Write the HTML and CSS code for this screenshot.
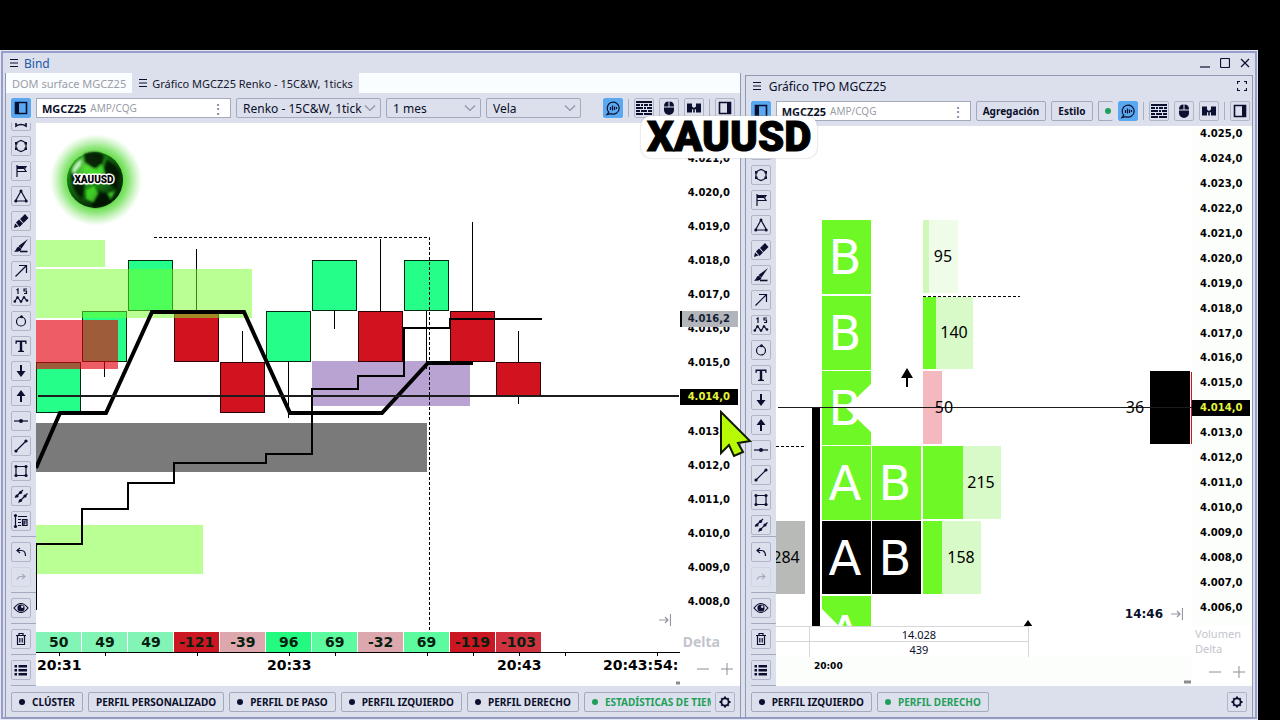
FILE: index.html
```
<!DOCTYPE html>
<html lang="es">
  <head>
    <meta charset="UTF-8">
    <meta name="viewport" content="width=device-width,initial-scale=1">
    <title>Bind</title>
    <link rel="stylesheet" href="styles.css">
  </head>
  <body>
    <!-- icon sprite -->
    <svg class="sprite" aria-hidden="true">
      <symbol id="i-menu" viewBox="0 0 10 10"><path d="M1 1.500h8M1 5h8M1 8.500h8"/></symbol>
      <symbol id="i-left" viewBox="0 0 16 16"><path stroke-width="1.600" d="M2.500 2.500h11v11h-11z"/><path class="f" d="M2 2h4v12H2z"/></symbol>
      <symbol id="i-right" viewBox="0 0 16 16"><path stroke-width="1.600" d="M2.500 2.500h11v11h-11z"/><path class="f" d="M10 2h4v12h-4z"/></symbol>
      <symbol id="i-bubble" viewBox="0 0 16 16"><path d="M3.800 12.200A6 6 0 1 1 6 13.700L2 14.500zM5.500 7v3M7.500 5.500v5M9.500 6.500v3.500M11.500 7v2"/></symbol>
      <symbol id="i-grid" viewBox="0 0 16 16"><path class="f" d="M0 1h16v2H0zM0 4h4v2H0zM5 4h2v2H5zM8 4h4v2H8zM13 4h3v2h-3zM0 7h7v2H0zM8 7h2v2H8zM11 7h5v2h-5zM0 10h4v2H0zM5 10h6v2H5zM12 10h4v2h-4zM0 13h7v2H0zM8 13h8v2H8z"/></symbol>
      <symbol id="i-mouse" viewBox="0 0 16 16"><path class="f" d="M3 6.500Q3 1.500 7.500 1.500v5zM8.500 1.500Q13 1.500 13 6.500H8.500zM3 7.500h10V10a5 5 0 0 1-10 0z"/></symbol>
      <symbol id="i-link" viewBox="0 0 16 16"><path class="f" d="M1 3.500h5v3l2 1.500 2-1.500v-3h5v9h-5V9.500L8.800 9v3.500H7.200V9L6 9.500v3H1z"/></symbol>
      <symbol id="i-pattern" viewBox="0 0 16 16"><path stroke-width="1.600" d="M3 10v3q5-3 10 0v-3"/></symbol>
      <symbol id="i-hex" viewBox="0 0 16 16"><path d="M5.500 3.500L8 2.500l2.500 1 2.500 1.500v6l-2.500 1.500L8 13.500l-2.500-1L3 11V5z"/><path class="f" d="M2 4h2.500v2.500H2zM11.500 4H14v2.500h-2.500zM2 9.500h2.500V12H2zM11.500 9.500H14V12h-2.500z"/></symbol>
      <symbol id="i-flag" viewBox="0 0 16 16"><path d="M4 2v12M4 3.500h9L11.500 6 13 8.500H4"/><path class="f" d="M4 3h8.500L11 6H4z"/></symbol>
      <symbol id="i-tri" viewBox="0 0 16 16"><path d="M8 3L13.500 13h-11z"/><g class="f"><circle cx="8" cy="3" r="1.500"/><circle cx="13.200" cy="13" r="1.500"/><circle cx="2.800" cy="13" r="1.500"/></g></symbol>
      <symbol id="i-marker" viewBox="0 0 16 16"><path class="f" d="M1 15l1-4.500 3.500 3zM3 9.500L6 6.500l4 4L6.500 14zM7 6l5-5 3.500 4-5 5z"/></symbol>
      <symbol id="i-brush" viewBox="0 0 16 16"><path class="f" d="M15 1l-6.500 9.500-3-2.500zM1 13.500q2-1 3-4l2-.8L8.500 11q-1 3.500-7.500 2.500z"/><path stroke-width="1.600" d="M7 13.500h7.500"/></symbol>
      <symbol id="i-arrow" viewBox="0 0 16 16"><path d="M2.500 13.500L13 3M6 2.500h7.500V10"/></symbol>
      <symbol id="i-wave" viewBox="0 0 16 16"><path d="M1.500 14l3-5 3.500 5 3-5 2.500 3.500"/><g class="f"><circle cx="1.800" cy="13.500" r="1.300"/><circle cx="4.500" cy="9.500" r="1.300"/><circle cx="8" cy="13.500" r="1.300"/><circle cx="11" cy="9.500" r="1.300"/><circle cx="14" cy="12.500" r="1.300"/></g><path d="M3.500 2L5 1v5M14 1h-3v2h2.500v2.500H11"/></symbol>
      <symbol id="i-circle" viewBox="0 0 16 16"><circle cx="8" cy="8.500" r="4.500"/><circle class="f" cx="8.500" cy="3.800" r="1.500"/></symbol>
      <symbol id="i-text" viewBox="0 0 16 16"><path class="f" d="M2.500 2.500h11V6h-1l-.5-2H9.200v8.500l1.800.5v1H5v-1l1.800-.5V4H4l-.5 2h-1z"/></symbol>
      <symbol id="i-down" viewBox="0 0 16 16"><path class="f" d="M7 2h2v6h3.500L8 14 3.500 8H7z"/></symbol>
      <symbol id="i-up" viewBox="0 0 16 16"><path class="f" d="M7 14h2V8h3.500L8 2 3.500 8H7z"/></symbol>
      <symbol id="i-hline" viewBox="0 0 16 16"><path d="M1 8h14"/><circle class="f" cx="8" cy="8" r="2"/></symbol>
      <symbol id="i-line" viewBox="0 0 16 16"><path d="M3 13L13 3"/><g class="f"><circle cx="3" cy="13" r="1.600"/><circle cx="13" cy="3" r="1.600"/></g></symbol>
      <symbol id="i-rect" viewBox="0 0 16 16"><path d="M3 3.500h10v9H3z"/><g class="f"><circle cx="3" cy="3.500" r="1.600"/><circle cx="13" cy="3.500" r="1.600"/><circle cx="3" cy="12.500" r="1.600"/><circle cx="13" cy="12.500" r="1.600"/></g></symbol>
      <symbol id="i-para" viewBox="0 0 16 16"><path d="M2 9.500L10 2M5.500 14.500l9-9"/><g class="f"><circle cx="4" cy="8" r="1.600"/><circle cx="7.500" cy="4.500" r="1.600"/><circle cx="7.500" cy="12.500" r="1.600"/><circle cx="12" cy="8" r="1.600"/></g></symbol>
      <symbol id="i-fib" viewBox="0 0 16 16"><path d="M2.500 2v12M5 3.500h9M5 6.500h3M5 9.500h3M5 12.500h3"/><g class="f"><circle cx="2.500" cy="2.500" r="1.600"/><circle cx="2.500" cy="13.500" r="1.600"/></g><path d="M9.500 6.500H14v6H9.500zM11 12V8h2.500M11 10h2"/></symbol>
      <symbol id="i-undo" viewBox="0 0 16 16"><path d="M7 4L4 6.500 7 9M4 6.500h4.500q4 0 4 5.500"/></symbol>
      <symbol id="i-redo" viewBox="0 0 16 16"><path d="M9 5l3 2.500L9 10M12 7.500H8q-3 0-4 3"/></symbol>
      <symbol id="i-eye" viewBox="0 0 16 16"><path d="M1 8q7-9 14 0-7 9-14 0z"/><circle class="f" cx="8" cy="8" r="3.600"/><circle cx="9.200" cy="6.800" r="1.200" fill="#dde0ee" stroke="none"/></symbol>
      <symbol id="i-trash" viewBox="0 0 16 16"><path d="M3 4.500h10M6 4V2.500h4V4M4.500 5v8.500h7V5M6.800 7v4.500M9.200 7v4.500"/></symbol>
      <symbol id="i-list" viewBox="0 0 16 16"><path class="f" d="M1.500 3h2.500v2.500H1.500zM5.500 3H14v2.500H5.500zM1.500 7h2.500v2.500H1.500zM5.500 7H14v2.500H5.500zM1.500 11h2.500v2.500H1.500zM5.500 11H14v2.500H5.500z"/></symbol>
      <symbol id="i-gear" viewBox="0 0 16 16"><circle cx="8" cy="8" r="3.600" stroke-width="1.800"/><path stroke-width="2" d="M8 2.500v1.500M8 12v1.500M2.500 8H4M12 8h1.500M4.300 4.300l.8.800M10.900 10.900l.8.800M11.700 4.300l-.8.800M5.100 10.900l-.8.800"/></symbol>
      <symbol id="i-end" viewBox="0 0 12 12"><path d="M0 6h9M6 3l3 3-3 3M11.500 0v12"/></symbol>
      <symbol id="i-chevron" viewBox="0 0 12 8"><path d="M1 1.500l5 5 5-5"/></symbol>
    </svg>

    <div class="window">
      <header class="titlebar">
        <svg class="menu"><use href="#i-menu"/></svg>
        <a href="#bind">Bind</a>
        <div class="winbtns">
          <button aria-label="Minimizar"><svg viewBox="0 0 10 10"><path d="M0 9h10"/></svg></button>
          <button aria-label="Maximizar"><svg viewBox="0 0 10 10"><rect x="0.500" y="0.500" width="9" height="9" rx="1"/></svg></button>
          <button aria-label="Cerrar"><svg viewBox="0 0 10 10"><path d="M1 1l8 8M9 1L1 9"/></svg></button>
        </div>
      </header>

      <main class="panels">
        <section class="panel renko">
          <nav class="tabs">
            <a href="#dom">DOM surface MGCZ25</a>
            <a href="#renko" class="active"><svg class="menu"><use href="#i-menu"/></svg>Gráfico MGCZ25 Renko - 15C&amp;W, 1ticks</a>
          </nav>
          <div class="toolbar">
            <button class="ico on" aria-label="Panel izquierdo"><svg><use href="#i-left"/></svg></button>
            <button class="symbol"><b>MGCZ25</b> <span>AMP/CQG</span><i>⋮</i></button>
            <label class="pick wide"><select aria-label="Tipo"><option>Renko - 15C&amp;W, 1ticks</option></select><svg><use href="#i-chevron"/></svg></label>
            <label class="pick"><select aria-label="Periodo"><option>1 mes</option></select><svg><use href="#i-chevron"/></svg></label>
            <label class="pick"><select aria-label="Estilo"><option>Vela</option></select><svg><use href="#i-chevron"/></svg></label>
            <div class="right">
              <button class="ico on" aria-label="Datos"><svg><use href="#i-bubble"/></svg></button>
              <hr>
              <button class="ico" aria-label="Tabla"><svg><use href="#i-grid"/></svg></button>
              <button class="ico" aria-label="Ratón"><svg><use href="#i-mouse"/></svg></button>
              <button class="ico" aria-label="Enlace"><svg><use href="#i-link"/></svg></button>
              <hr>
              <button class="ico" aria-label="Panel derecho"><svg><use href="#i-right"/></svg></button>
            </div>
          </div>

          <div class="work">
            <aside class="tools">
              <div class="draw">
                <button class="ico" aria-label="Patrón"><svg><use href="#i-pattern"/></svg></button>
                <button class="ico" aria-label="Polígono"><svg><use href="#i-hex"/></svg></button>
                <button class="ico" aria-label="Bandera"><svg><use href="#i-flag"/></svg></button>
                <button class="ico" aria-label="Triángulo"><svg><use href="#i-tri"/></svg></button>
                <button class="ico" aria-label="Marcador"><svg><use href="#i-marker"/></svg></button>
                <button class="ico" aria-label="Pincel"><svg><use href="#i-brush"/></svg></button>
                <button class="ico" aria-label="Flecha"><svg><use href="#i-arrow"/></svg></button>
                <button class="ico" aria-label="Ondas"><svg><use href="#i-wave"/></svg></button>
                <button class="ico" aria-label="Círculo"><svg><use href="#i-circle"/></svg></button>
                <button class="ico" aria-label="Texto"><svg><use href="#i-text"/></svg></button>
                <button class="ico" aria-label="Abajo"><svg><use href="#i-down"/></svg></button>
                <button class="ico" aria-label="Arriba"><svg><use href="#i-up"/></svg></button>
                <button class="ico" aria-label="Horizontal"><svg><use href="#i-hline"/></svg></button>
                <button class="ico" aria-label="Línea"><svg><use href="#i-line"/></svg></button>
                <button class="ico" aria-label="Rectángulo"><svg><use href="#i-rect"/></svg></button>
                <button class="ico" aria-label="Paralelas"><svg><use href="#i-para"/></svg></button>
                <button class="ico" aria-label="Fibonacci"><svg><use href="#i-fib"/></svg></button>
              </div>
              <div class="grp"><button class="ico" aria-label="Deshacer"><svg><use href="#i-undo"/></svg></button><button class="ico" aria-label="Rehacer" disabled><svg><use href="#i-redo"/></svg></button></div>
              <div class="grp"><button class="ico" aria-label="Ver"><svg><use href="#i-eye"/></svg></button></div>
              <div class="grp"><button class="ico" aria-label="Borrar"><svg><use href="#i-trash"/></svg></button></div>
              <div class="grp last"><button class="ico" aria-label="Lista"><svg><use href="#i-list"/></svg></button></div>
            </aside>

            <div class="chart">
              <div class="plot">
                <svg class="canvas">
                  <defs>
                    <radialGradient id="glow"><stop offset="0.500" stop-color="#3fd41c"/><stop offset="0.720" stop-color="#6fe056" stop-opacity=".75"/><stop offset="1" stop-color="#8fe87c" stop-opacity="0"/></radialGradient>
                    <radialGradient id="ball" cx=".35" cy=".3" r=".75"><stop offset="0" stop-color="#5be03c"/><stop offset=".5" stop-color="#157a10"/><stop offset="1" stop-color="#031a04"/></radialGradient>
                    <filter id="soft"><feGaussianBlur stdDeviation="1.200"/></filter>
                  </defs>
                  <g transform="translate(-36 -123)">
                    <path fill="#7a7a7a" d="M36 423h391v49H36z"/>
                    <path fill="#b9a3d2" d="M312 361h158v45H312z"/>
                    <path class="wick" d="M104.500 361v16M196.500 249v62M242.500 331v31M288.500 361v57M334.500 311v18M380.500 239v72M426.500 311v58M472.500 222v89M518.500 331v73"/>
                    <g class="buy">
                      <rect x="36.500" y="362.500" width="44" height="50"/>
                      <rect x="82.500" y="311.500" width="44" height="50"/>
                      <rect x="128.500" y="260.500" width="44" height="50"/>
                      <rect x="266.500" y="311.500" width="44" height="50"/>
                      <rect x="312.500" y="260.500" width="44" height="50"/>
                      <rect x="404.500" y="260.500" width="44" height="50"/>
                    </g>
                    <g class="sell">
                      <rect x="174.500" y="311.500" width="44" height="50"/>
                      <rect x="220.500" y="362.500" width="44" height="50"/>
                      <rect x="358.500" y="311.500" width="44" height="50"/>
                      <rect x="450.500" y="311.500" width="44" height="50"/>
                      <rect x="496.500" y="362.500" width="44" height="33"/>
                    </g>
                    <path class="zone-g" d="M36 240h69v27H36zM36 269h216v49H36zM36 525h167v49H36z"/>
                    <path class="zone-r" d="M36 320h82v49H36z"/>
                    <path class="step" d="M36 610V544H82V509H128V483H174V463H266V454H312V389H358V376H404V328H450V319H542"/>
                    <path class="trend" d="M36 468L60 413H106L152 312H244L290 413H382L428 363H473"/>
                    <path class="now" d="M38 396H679"/>
                    <path class="dots" d="M154 237.500H429.500V632"/>
                    <circle cx="96" cy="180" r="46" fill="url(#glow)"/>
                    <circle cx="95" cy="180" r="28" fill="url(#ball)"/>
                    <g filter="url(#soft)">
                      <path fill="#031003" opacity=".85" d="M84 154q14-5 20 2l-2 9-8 4-9-7zM107 160q10 4 13 14l-3 16-9-7-7-8zM71 173l9 3 5 10-3 13q-12-10-11-26zM96 190l12 4 3 7q-8 7-18 6l-3-8z"/>
                      <path fill="#49e62c" opacity=".8" d="M88 167l9 3 4-6 4 9-8 6-7-3zM86 190l8-4 4 7-5 9-7-3zM108 193l7-2-4 8z"/>
                      <path fill="#dfffe0" opacity=".8" d="M72 170q3-8 10-11l-1 6-7 9z"/>
                    </g>
                    <text class="ball-name" x="94" y="183">XAUUSD</text>
                  </g>
                </svg>
                <svg class="end"><use href="#i-end"/></svg>
              </div>
              <ol class="prices">
                <li>4.021,0</li><li>4.020,0</li><li>4.019,0</li><li>4.018,0</li><li>4.017,0</li><li>4.016,0</li><li>4.015,0</li>
                <li class="tag">4.014,0</li>
                <li>4.013,0</li><li>4.012,0</li><li>4.011,0</li><li>4.010,0</li><li>4.009,0</li><li>4.008,0</li>
                <li class="avg">4.016,2</li>
              </ol>
              <table class="delta">
                <tr>
                  <td class="g1">50</td><td class="g1">49</td><td class="g1">49</td><td class="r4">-121</td><td class="r1">-39</td><td class="g3">96</td><td class="g2">69</td><td class="r1">-32</td><td class="g2">69</td><td class="r4">-119</td><td class="r3">-103</td>
                </tr>
              </table>
              <div class="rowname">Delta</div>
              <svg class="times">
                <path d="M0 .5H2000M23.500 0v4M69.500 0v4M161.500 0v4M253.500 0v4M299.500 0v4M391.500 0v4M437.500 0v4M483.500 0v4M529.500 0v4M621.500 0v4"/>
                <text x="1" y="18">20:31</text><text x="231" y="18">20:33</text><text x="461" y="18">20:43</text><text x="567" y="18">20:43:54:</text>
                <path class="grip" d="M640 31h5"/>
              </svg>
              <div class="zoom"><button aria-label="Alejar"><svg viewBox="0 0 12 12"><path d="M0 6h12"/></svg></button><button aria-label="Acercar"><svg viewBox="0 0 12 12"><path d="M0 6h12M6 0v12"/></svg></button></div>
            </div>
          </div>

          <footer class="bottom">
            <div class="chips">
              <button class="dot">CLÚSTER</button>
              <button>PERFIL PERSONALIZADO</button>
              <button class="dot">PERFIL DE PASO</button>
              <button class="dot">PERFIL IZQUIERDO</button>
              <button class="dot">PERFIL DERECHO</button>
              <button class="dot live">ESTADÍSTICAS DE TIEMPO</button>
            </div>
            <button class="ico" aria-label="Ajustes"><svg><use href="#i-gear"/></svg></button>
          </footer>
        </section>

        <section class="panel tpo">
          <h2 class="caption"><svg class="menu"><use href="#i-menu"/></svg>Gráfico TPO MGCZ25
            <button aria-label="Pantalla completa"><svg viewBox="0 0 10 10"><path d="M.5 3V.5H3M7 .5h2.500V3M9.500 7v2.500H7M3 9.500H.5V7"/></svg></button>
          </h2>
          <div class="toolbar">
            <button class="ico on" aria-label="Panel izquierdo"><svg><use href="#i-left"/></svg></button>
            <button class="symbol"><b>MGCZ25</b> <span>AMP/CQG</span><i>⋮</i></button>
            <button class="txt">Agregación</button>
            <button class="txt">Estilo</button>
            <button class="led" aria-label="Estado"></button>
            <div class="right">
              <button class="ico on" aria-label="Datos"><svg><use href="#i-bubble"/></svg></button>
              <hr>
              <button class="ico" aria-label="Tabla"><svg><use href="#i-grid"/></svg></button>
              <button class="ico" aria-label="Ratón"><svg><use href="#i-mouse"/></svg></button>
              <button class="ico" aria-label="Enlace"><svg><use href="#i-link"/></svg></button>
              <hr>
              <button class="ico" aria-label="Panel derecho"><svg><use href="#i-right"/></svg></button>
            </div>
          </div>

          <div class="work">
            <aside class="tools">
              <div class="draw">
                <button class="ico" aria-label="Patrón"><svg><use href="#i-pattern"/></svg></button>
                <button class="ico" aria-label="Polígono"><svg><use href="#i-hex"/></svg></button>
                <button class="ico" aria-label="Bandera"><svg><use href="#i-flag"/></svg></button>
                <button class="ico" aria-label="Triángulo"><svg><use href="#i-tri"/></svg></button>
                <button class="ico" aria-label="Marcador"><svg><use href="#i-marker"/></svg></button>
                <button class="ico" aria-label="Pincel"><svg><use href="#i-brush"/></svg></button>
                <button class="ico" aria-label="Flecha"><svg><use href="#i-arrow"/></svg></button>
                <button class="ico" aria-label="Ondas"><svg><use href="#i-wave"/></svg></button>
                <button class="ico" aria-label="Círculo"><svg><use href="#i-circle"/></svg></button>
                <button class="ico" aria-label="Texto"><svg><use href="#i-text"/></svg></button>
                <button class="ico" aria-label="Abajo"><svg><use href="#i-down"/></svg></button>
                <button class="ico" aria-label="Arriba"><svg><use href="#i-up"/></svg></button>
                <button class="ico" aria-label="Horizontal"><svg><use href="#i-hline"/></svg></button>
                <button class="ico" aria-label="Línea"><svg><use href="#i-line"/></svg></button>
                <button class="ico" aria-label="Rectángulo"><svg><use href="#i-rect"/></svg></button>
                <button class="ico" aria-label="Paralelas"><svg><use href="#i-para"/></svg></button>
              </div>
              <div class="grp"><button class="ico" aria-label="Deshacer"><svg><use href="#i-undo"/></svg></button><button class="ico" aria-label="Rehacer" disabled><svg><use href="#i-redo"/></svg></button></div>
              <div class="grp"><button class="ico" aria-label="Ver"><svg><use href="#i-eye"/></svg></button></div>
              <div class="grp"><button class="ico" aria-label="Borrar"><svg><use href="#i-trash"/></svg></button></div>
              <div class="grp last"><button class="ico" aria-label="Lista"><svg><use href="#i-list"/></svg></button></div>
            </aside>

            <div class="chart">
              <div class="plot">
                <svg class="canvas">
                  <g transform="translate(-776 -126)">
                    <path fill="#b8bab8" d="M776 521h29v73h-29z"/>
                    <path d="M812 407h8v219h-8z"/>
                    <path fill="#6ef826" d="M822 220h49v74h-49zM822 296h49v74h-49zM822 371h49v74h-49zM822 446h49v74h-49zM872 446h49v74h-49zM822 596h49v30h-49z"/>
                    <path d="M822 521h49v73h-49zM872 521h49v73h-49z"/>
                    <g class="letters">
                      <text x="845" y="274">B</text>
                      <text x="845" y="350">B</text>
                      <text x="845" y="425">B</text>
                      <text x="845" y="500">A</text><text x="895" y="500">B</text>
                      <text x="845" y="575">A</text><text x="895" y="575">B</text>
                      <text x="845" y="650">A</text>
                    </g>
                    <path fill="#fff" d="M872 383l-26 25 26 25zM822 609l17 17h-17z"/>
                    <path fill="#d0f8b8" d="M923 220h6v73h-6z"/>
                    <path fill="#eefce8" d="M929 220h29v73h-29z"/>
                    <path fill="#d8fac8" d="M936 297h37v72h-37zM963 446h38v73h-38zM942 521h39v73h-39z"/>
                    <path fill="#6ef826" d="M923 297h13v72h-13zM923 446h40v73h-40zM923 521h19v73h-19z"/>
                    <path fill="#f3b9be" d="M923 371h19v73h-19z"/>
                    <path class="dots" d="M923 296.500H1020M776 446.500H805"/>
                    <path d="M906 387v-9h-5l6-10 6 10h-5v9zM1150 371h40v73h-40zM1023 627l5-7 5 7z"/>
                    <path stroke="#c01828" d="M1191.500 372v72"/>
                    <path class="now thin" d="M778 407.500H1192"/>
                    <g class="vols">
                      <text x="943" y="262">95</text>
                      <text x="954" y="338">140</text>
                      <text x="944" y="413">50</text>
                      <text x="981" y="488">215</text>
                      <text x="961" y="563">158</text>
                      <text x="1135" y="413">36</text>
                      <text x="786" y="563">284</text>
                    </g>
                  </g>
                </svg>
                <div class="clock">14:46 <svg><use href="#i-end"/></svg></div>
              </div>
              <ol class="prices">
                <li>4.025,0</li><li>4.024,0</li><li>4.023,0</li><li>4.022,0</li><li>4.021,0</li><li>4.020,0</li><li>4.019,0</li><li>4.018,0</li><li>4.017,0</li><li>4.016,0</li><li>4.015,0</li>
                <li class="tag">4.014,0</li>
                <li>4.013,0</li><li>4.012,0</li><li>4.011,0</li><li>4.010,0</li><li>4.009,0</li><li>4.008,0</li><li>4.007,0</li><li>4.006,0</li>
              </ol>
              <table class="stats">
                <tr><td></td><td>14.028</td></tr>
                <tr><td></td><td>439</td></tr>
              </table>
              <div class="rowname">Volumen<br>Delta</div>
              <svg class="times"><text x="38" y="12">20:00</text><path class="grip" d="M408 25h7"/></svg>
              <div class="zoom"><button aria-label="Alejar"><svg viewBox="0 0 12 12"><path d="M0 6h12"/></svg></button><button aria-label="Acercar"><svg viewBox="0 0 12 12"><path d="M0 6h12M6 0v12"/></svg></button></div>
            </div>
          </div>

          <footer class="bottom">
            <div class="chips">
              <button class="dot">PERFIL IZQUIERDO</button>
              <button class="dot live">PERFIL DERECHO</button>
            </div>
            <button class="ico" aria-label="Ajustes"><svg><use href="#i-gear"/></svg></button>
          </footer>
        </section>
      </main>
    </div>

    <div class="sticker">XAUUSD</div>
    <svg class="pointer" viewBox="0 0 34 50"><path d="M2 2L31 31 19 33 24 42 15 46 10 35 2 43z"/></svg>
  </body>
</html>
```
FILE: styles.css
```
* {
  box-sizing: border-box;
}
body {
  margin: 0;
  height: 100vh;
  padding: 50px 22px 0 0;
  background-color: #000;
  font-family: "Noto Sans", sans-serif;
  font-size: 11px;
  color: #0a0f2a;
  overflow: hidden;
}
button, select {
  font: inherit;
  color: inherit;
  background: none;
  border: none;
  padding: 0;
  margin: 0;
}
svg {
  display: block;
  fill: none;
  stroke: #0c1030;
  stroke-width: 1.2;
}
.f {
  fill: #0c1030;
  stroke: none;
}
.sprite {
  position: absolute;
  width: 0;
  height: 0;
}
.menu {
  width: 10px;
  height: 10px;
  flex: none;
}
.window {
  height: 100%;
  display: flex;
  flex-direction: column;
  background-color: #dcdfec;
  border: 1px solid #e4e8f6;
  box-shadow: inset 0 0 0 2px #979cc8;
  padding: 2px 4px 1px 4px;
}

/* title bar */
.titlebar {
  height: 20px;
  flex: none;
  display: flex;
  align-items: center;
  gap: 5px;
  padding: 0 3px 0 4px;
  font-size: 12px;
}
.titlebar a {
  color: #2158a8;
  text-decoration: none;
}
.winbtns {
  margin-left: auto;
  display: flex;
  gap: 10px;
}
.winbtns svg, .caption button svg {
  width: 10px;
  height: 10px;
}

.panels {
  flex: 1;
  min-height: 0;
  display: flex;
  gap: 4px;
}
.panel {
  display: flex;
  flex-direction: column;
  min-width: 0;
  border: 1px solid #9099b4;
  border-top: none;
}
.renko {
  flex: 736;
}
.tpo {
  flex: 508;
  margin-top: 2px;
  border-top: 1px solid #9099b4;
}

.tabs {
  flex: none;
  height: 20px;
  display: flex;
  background-color: #fafdff;
}
.tabs a {
  display: flex;
  align-items: center;
  gap: 4px;
  padding: 0 6px;
  color: #9a9ca6;
  text-decoration: none;
  white-space: nowrap;
}
.tabs .active {
  color: #14182e;
  background-color: #dcdfec;
}
.caption {
  flex: none;
  height: 20px;
  display: flex;
  align-items: center;
  gap: 7px;
  margin: 0;
  padding: 0 5px 0 6px;
  font-size: 12px;
  font-weight: 400;
}
.caption button {
  margin-left: auto;
}

/* toolbars */
.toolbar {
  flex: none;
  height: 30px;
  display: flex;
  align-items: center;
  gap: 5px;
  padding: 0 5px;
}
.right {
  margin-left: auto;
  display: flex;
  align-items: center;
  gap: 5px;
}
.right hr {
  width: 1px;
  height: 18px;
  margin: 0;
  border: none;
  background-color: #a9aec2;
}
.ico {
  flex: none;
  width: 20px;
  height: 20px;
  display: grid;
  place-items: center;
  border: 1px solid #b0b5c8;
  border-radius: 2px;
}
.ico svg {
  width: 16px;
  height: 16px;
}
.ico.on {
  background-color: #5aa9f0;
  border-color: #5aa9f0;
}
.ico:disabled {
  opacity: .25;
}
.symbol {
  flex: 0 0 195px;
  height: 20px;
  display: flex;
  align-items: center;
  gap: 4px;
  padding: 0 5px;
  background-color: #fff;
  border: 1px solid #a4aabd;
}
.symbol span {
  color: #9a9ca6;
  font-size: 10px;
}
.symbol i {
  margin-left: auto;
  font-style: normal;
  font-size: 14px;
  color: #70758a;
}
.pick {
  position: relative;
  flex: 0 0 95px;
  height: 20px;
  border: 1px solid #a4aabd;
  border-radius: 2px;
}
.pick.wide {
  flex-basis: 145px;
}
.pick select {
  appearance: none;
  width: 100%;
  height: 18px;
  padding: 0 18px 0 6px;
  font-size: 12px;
}
.pick svg {
  position: absolute;
  right: 4px;
  top: 5px;
  width: 12px;
  height: 8px;
  stroke: #8e94a8;
}
.txt, .led {
  flex: none;
  height: 20px;
  padding: 0 6px;
  font-size: 10px;
  font-weight: 700;
  border: 1px solid #a4aabd;
  border-radius: 2px;
}
.led {
  width: 15px;
  padding: 0 0 0 6px;
  border-right: none;
}
.led::before, .dot::before {
  content: "";
  display: block;
  width: 6px;
  height: 6px;
  border-radius: 50%;
  background-color: #1f9f5a;
}

/* drawing tools */
.work {
  flex: 1;
  min-height: 0;
  display: flex;
}
.tools {
  flex: none;
  width: 30px;
  display: flex;
  flex-direction: column;
  padding-left: 5px;
}
.draw {
  flex: 1;
  min-height: 0;
  display: flex;
  flex-direction: column;
  justify-content: flex-end;
  gap: 5px;
  padding-bottom: 5px;
  overflow: hidden;
}
.tpo .draw {
  padding-bottom: 1px;
}
.grp {
  display: flex;
  flex-direction: column;
  gap: 5px;
  padding: 5px 0;
  border-top: 1px solid #a4aabd;
}
.grp.last {
  border-bottom: 1px solid #a4aabd;
}

/* charts */
.chart {
  flex: 1;
  min-width: 0;
  display: grid;
  grid-template-columns: minmax(0, 1fr) 60px;
  grid-template-rows: minmax(0, 1fr) 20px 34px;
  background-color: #fff;
}
.tpo .chart {
  grid-template-rows: minmax(0, 1fr) 31px 29px;
}
.plot {
  position: relative;
  min-height: 0;
  overflow: hidden;
}
.canvas {
  width: 100%;
  height: 100%;
  fill: #000;
  stroke: none;
}
.wick {
  stroke: #000;
  stroke-width: 1;
}
.buy, .sell {
  fill: #25ff89;
  stroke: #002a10;
  stroke-width: 1;
}
.sell {
  fill: #d1121f;
  stroke: #2c0004;
}
.zone-g {
  fill: rgba(118, 255, 43, .51);
}
.zone-r {
  fill: rgba(228, 0, 16, .64);
}
.step, .trend, .now, .dots {
  fill: none;
  stroke: #000;
  stroke-width: 2;
}
.trend {
  stroke-width: 4;
}
.now {
  stroke: #1c1c1c;
}
.thin {
  stroke-width: 1;
}
.dots {
  stroke-width: 1;
  stroke-dasharray: 3 2;
}
.ball-name {
  font: 900 10px Roboto, sans-serif;
  text-anchor: middle;
  stroke: #fff;
  stroke-width: 3;
  stroke-linejoin: round;
  paint-order: stroke;
}
.letters {
  font: 48px "DejaVu Sans", sans-serif;
  fill: #fff;
  text-anchor: middle;
}
.vols {
  font-size: 16px;
  text-anchor: middle;
}
.end {
  position: absolute;
  right: 9px;
  bottom: 6px;
  width: 12px;
  height: 12px;
  stroke: #9296a0;
}
.clock {
  position: absolute;
  right: 9px;
  bottom: 4px;
  display: flex;
  align-items: center;
  gap: 8px;
  font: bold 12px/16px "DejaVu Sans", sans-serif;
}
.clock svg {
  width: 12px;
  height: 12px;
  stroke: #9296a0;
}

.prices {
  position: relative;
  display: flex;
  flex-direction: column;
  justify-content: space-between;
  min-height: 0;
  margin: 0;
  padding: 28px 2px 22px 0;
  list-style: none;
  font: bold 10px/16px "DejaVu Sans", sans-serif;
  color: #000;
}
.prices li {
  padding-left: 8px;
}
.tpo .prices {
  padding: 0 2px 10px 0;
  background-color: #fcfefb;
}
.prices .tag {
  background-color: #000;
  color: #e6f43c;
}
.prices .avg {
  position: absolute;
  top: 188px;
  left: 0;
  right: 2px;
  padding-left: 6px;
  border-left: 2px solid #000;
  background-color: #b2b6ba;
  color: #141c34;
}

.delta {
  width: 506px;
  table-layout: fixed;
  border-collapse: collapse;
  font: bold 14px/19px "DejaVu Sans", sans-serif;
  color: #06200f;
  text-align: center;
}
.delta td {
  height: 20px;
  padding: 0;
  border-right: 1px solid #fff;
}
.g1 { background-color: #82f5b6; }
.g2 { background-color: #5cfba0; }
.g3 { background-color: #24fa80; }
.r1 { background-color: #dca8ae; }
.r3 { background-color: #d03240; }
.r4 { background-color: #cb1722; }
.rowname {
  padding-left: 3px;
  font-size: 14px;
  font-weight: 700;
  line-height: 20px;
  color: #c3c5cd;
}
.tpo .rowname {
  font-size: 11px;
  font-weight: 400;
  line-height: 15px;
}
.times {
  width: 100%;
  height: 100%;
  overflow: hidden;
  font: bold 14px "DejaVu Sans", sans-serif;
  stroke: #000;
  stroke-width: 1;
}
.times text {
  fill: #000;
  stroke: none;
}
.times .grip {
  stroke: #8a8c90;
  stroke-width: 3;
}
.tpo .times {
  font-size: 9px;
  background-color: #fcfefb;
}
.stats {
  width: 253px;
  table-layout: fixed;
  border-collapse: collapse;
  line-height: 13px;
  text-align: center;
}
.stats td {
  height: 15px;
  padding: 0;
  border-top: 1px solid #d4d6d8;
  border-right: 1px solid #d4d6d8;
}
.stats td:first-child {
  width: 34px;
}
.zoom {
  display: flex;
  align-items: center;
  justify-content: flex-end;
  gap: 12px;
  padding-right: 7px;
}
.zoom svg {
  width: 12px;
  height: 12px;
  stroke: #8c8e94;
  stroke-width: 1;
}

/* bottom bars */
.bottom {
  flex: none;
  height: 31px;
  display: flex;
  align-items: center;
  gap: 4px;
  padding: 0 5px;
}
.chips {
  flex: 1;
  min-width: 0;
  display: flex;
  gap: 5px;
  overflow: hidden;
}
.chips button {
  flex: none;
  height: 20px;
  display: flex;
  align-items: center;
  gap: 7px;
  padding: 0 7px;
  font-size: 10px;
  font-weight: 700;
  white-space: nowrap;
  border: 1px solid #a4aabd;
  border-radius: 2px;
}
.dot::before {
  background-color: #0c1030;
}
.chips .live {
  color: #1f9f5a;
}
.live::before {
  background-color: #1f9f5a;
}

.sticker {
  position: absolute;
  left: 641px;
  top: 116px;
  padding: 0 6px;
  font: 900 42px/42px Roboto, sans-serif;
  color: #000;
  -webkit-text-stroke: 1px #000;
  background-color: #fff;
  border-radius: 10px;
  box-shadow: 0 0 2px #bbb;
}
.pointer {
  position: absolute;
  left: 719px;
  top: 410px;
  width: 34px;
  height: 50px;
  fill: #b8fa06;
  stroke: #101800;
  stroke-width: 2;
}
```
